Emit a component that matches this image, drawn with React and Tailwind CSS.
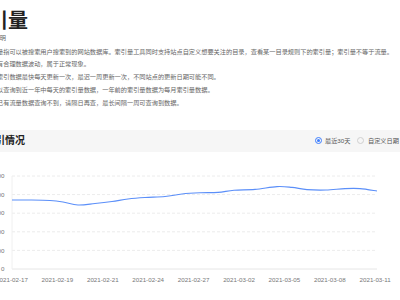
import React from 'react';

const notes = [
  '1、索引量指可以被搜索用户搜索到的网站数据库。索引量工具同时支持站点自定义想要关注的目录，查看某一目录规则下的索引量；索引量不等于流量。',
  '2、索引有合理数据波动，属于正常现象。',
  '3、站点索引数据最快每天更新一次，最迟一周更新一次，不同站点的更新日期可能不同。',
  '4、您可以查询到近一年中每天的索引量数据，一年前的索引量数据为每月索引量数据。',
  '5、当天已有流量数据查询不到，请隔日再查，最长间隔一周可查询到数据。',
];

const points = [
  [12, 200], [30, 200], [50, 200.5], [63, 202], [78, 205], [95, 203.5], [112, 201.5],
  [128, 199], [145, 197.5], [165, 196.5], [182, 194], [200, 192.8], [218, 192.4],
  [234, 190.2], [255, 189.4], [277, 186.6], [292, 187.4], [307, 189.6], [326, 190],
  [345, 188.6], [360, 188.6], [377, 191],
];

const xLabels = ['2021-02-17', '2021-02-19', '2021-02-21', '2021-02-24', '2021-02-27', '2021-03-02', '2021-03-05', '2021-03-08', '2021-03-11'];
const yLabels = ['2500', '2000', '1500', '1000', '500', '0'];

const TOP = 165;

// catmull-rom -> bezier for a smooth line
function smoothPath(pts) {
  const p = pts.map(([x, y]) => [x, y - TOP]);
  let d = `M${p[0][0]},${p[0][1]}`;
  for (let i = 0; i < p.length - 1; i++) {
    const p0 = p[i - 1] || p[i];
    const p1 = p[i];
    const p2 = p[i + 1];
    const p3 = p[i + 2] || p2;
    const c1x = p1[0] + (p2[0] - p0[0]) / 6;
    const c1y = p1[1] + (p2[1] - p0[1]) / 6;
    const c2x = p2[0] - (p3[0] - p1[0]) / 6;
    const c2y = p2[1] - (p3[1] - p1[1]) / 6;
    d += ` C${c1x},${c1y} ${c2x},${c2y} ${p2[0]},${p2[1]}`;
  }
  return d;
}

function Radio({ label, checked }) {
  return (
    <div className="flex items-center gap-[3.5px]">
      <span
        className={`w-[7px] h-[7px] rounded-full border flex items-center justify-center ${
          checked ? 'border-[#3d7eff]' : 'border-[#d0d0d0]'
        }`}
      >
        {checked && <span className="w-[3px] h-[3px] rounded-full bg-[#3d7eff]" />}
      </span>
      <span className="text-[6.2px] leading-none text-[#555]">{label}</span>
    </div>
  );
}

export default function App() {
  const gridYs = [176, 194.6, 213.2, 231.8, 250.4];

  return (
    <div className="w-[400px] h-[300px] overflow-hidden bg-white font-['Liberation_Sans','Noto_Sans_CJK_SC',sans-serif]">
      <div className="-ml-[25px] w-[425px] pt-[11px] whitespace-nowrap">
        <h1 className="-ml-[7px] text-[20px] leading-[20px] font-bold text-[#222]">索引量</h1>
        <p className="text-[6.2px] leading-[12.75px] text-[#666] mt-[0.6px] mb-[1.25px]">索引量说明</p>
        {notes.map((n) => (
          <p key={n} className="text-[6.2px] leading-[12.75px] text-[#666]">{n}</p>
        ))}

        {/* section header */}
        <div className="mt-[20.6px] h-[22px] bg-[#f6f6f6] flex items-center">
          <h2 className="ml-[10px] text-[10px] leading-none font-bold text-[#222]">索引情况</h2>
          <div className="ml-[289.5px] flex items-center gap-[7px]">
            <Radio label="最近30天" checked />
            <Radio label="自定义日期" />
          </div>
        </div>
      </div>

      {/* chart */}
      <svg width="400" height="130" viewBox="0 0 400 130" className="mt-[13px] block">
        {gridYs.map((y) => (
          <line key={y} x1="12" x2="377" y1={y - TOP} y2={y - TOP} stroke="#ececec" strokeWidth="1" strokeDasharray="3 2" />
        ))}
        <line x1="12" x2="377" y1={269 - TOP} y2={269 - TOP} stroke="#e6e6e6" strokeWidth="1" />
        <line x1="12" x2="12" y1={176 - TOP} y2={269 - TOP} stroke="#f0f0f0" strokeWidth="1" />
        {yLabels.map((l, i) => (
          <text key={l} x="4.5" y={[176, 194.6, 213.2, 231.8, 250.4, 269][i] - TOP + 2.2} textAnchor="end" fontSize="6.2" fill="#777">
            {l}
          </text>
        ))}
        <path d={smoothPath(points)} fill="none" stroke="#5b8ff9" strokeWidth="1.1" />
        {xLabels.map((l, i) => (
          <text key={l} x={12 + i * 45.4} y={282.3 - TOP} textAnchor="middle" fontSize="6.2" fill="#777">
            {l}
          </text>
        ))}
      </svg>
    </div>
  );
}
